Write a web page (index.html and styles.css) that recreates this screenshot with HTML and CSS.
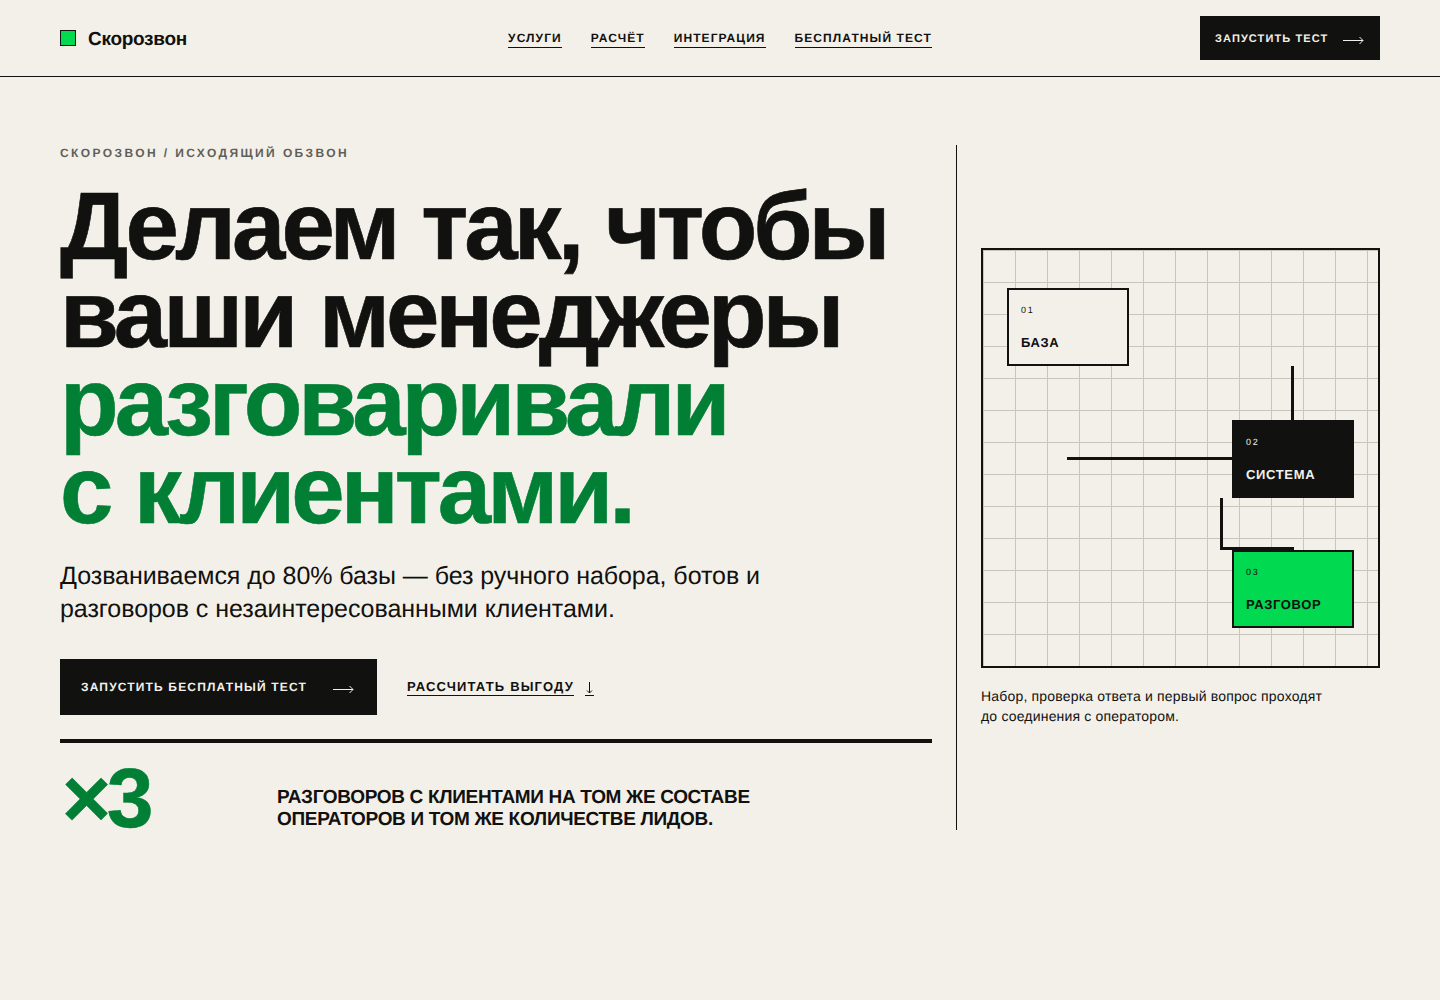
FILE: index.html
```html
<!DOCTYPE html>
<html lang="ru">
<head>
<meta charset="utf-8">
<title>Скорозвон</title>
<link rel="stylesheet" href="styles.css">
</head>
<body>
<header class="header">
  <a class="brand"><span class="brand-mark"></span><span class="brand-name">Скорозвон</span></a>
  <nav class="nav">
    <a>Услуги</a>
    <a>Расчёт</a>
    <a>Интеграция</a>
    <a>Бесплатный тест</a>
  </nav>
  <a class="btn btn-small"><span class="btn-label">Запустить тест</span>
    <svg class="arrow" width="21" height="9" viewBox="0 0 21 9"><path d="M0 4.5H20M16.5 1L20 4.5L16.5 8" fill="none" stroke="currentColor"/></svg>
  </a>
</header>
<main class="hero">
  <section class="lead">
    <p class="eyebrow">Скорозвон / исходящий обзвон</p>
    <h1 class="title">Делаем так, чтобы<br>ваши менеджеры<br><em>разговаривали<br>с клиентами.</em></h1>
    <p class="sub">Дозваниваемся до 80% базы — без ручного набора, ботов и<br>разговоров с незаинтересованными клиентами.</p>
    <div class="actions">
      <a class="btn btn-large">Запустить бесплатный тест
        <svg class="arrow" width="21" height="9" viewBox="0 0 21 9"><path d="M0 4.5H20M16.5 1L20 4.5L16.5 8" fill="none" stroke="currentColor"/></svg>
      </a>
      <a class="link"><span class="link-text">Рассчитать выгоду</span><span class="link-arrow"><svg width="9" height="13" viewBox="0 0 9 13"><path d="M4.5 1V12M2 9.5L4.5 12L7 9.5" fill="none" stroke="currentColor"/></svg></span></a>
    </div>
    <div class="stat">
      <div class="stat-num">×3</div>
      <p class="stat-text">Разговоров с клиентами на том же составе<br>операторов и том же количестве лидов.</p>
    </div>
  </section>
  <aside class="side">
    <div class="diagram">
      <div class="wire wire-a"></div>
      <div class="wire wire-b"></div>
      <div class="wire wire-c"></div>
      <div class="wire wire-d"></div>
      <div class="node node-1"><span class="node-num">01</span><span class="node-label">База</span></div>
      <div class="node node-2"><span class="node-num">02</span><span class="node-label">Система</span></div>
      <div class="node node-3"><span class="node-num">03</span><span class="node-label">Разговор</span></div>
    </div>
    <p class="caption">Набор, проверка ответа и первый вопрос проходят<br>до соединения с оператором.</p>
  </aside>
</main>
</body>
</html>
```
FILE: styles.css
```css
* { box-sizing: border-box; }
html, body { margin: 0; padding: 0; }
body {
  background: #f3f0e9;
  color: #11110f;
  font-family: "Liberation Sans", Arial, sans-serif;
  text-rendering: geometricPrecision;
  min-height: 1000px;
}
p, h1 { margin: 0; }

.header {
  height: 77px;
  padding: 0 60px;
  border-bottom: 1px solid #11110f;
  display: grid;
  grid-template-columns: 1fr auto 1fr;
  align-items: center;
}
.brand { display: flex; align-items: center; gap: 12px; }
.brand-mark { width: 16px; height: 16px; background: #00d950; border: 1px solid #11110f; }
.brand-name { font-size: 19px; line-height: 24px; font-weight: 700; letter-spacing: -0.015em; padding-top: 4px; }
.nav { display: flex; gap: 29px; padding-top: 2px; }
.nav a {
  font-size: 12px;
  font-weight: 700;
  letter-spacing: 0.09em;
  text-transform: uppercase;
  line-height: 16px;
  padding-bottom: 1px;
  border-bottom: 1px solid #11110f;
}
.btn {
  display: inline-flex;
  align-items: center;
  justify-content: space-between;
  background: #11110f;
  color: #f3f0e9;
  font-weight: 700;
  text-transform: uppercase;
  letter-spacing: 0.1em;
  font-size: 11px;
}
.btn-small { justify-self: end; width: 180px; height: 44px; padding: 0 16px 0 15px; }
.btn-label { padding-top: 1px; }
.btn-small .arrow { margin-top: 4px; }
.btn-large { width: 317px; height: 56px; padding: 0 23px 0 21px; font-size: 12px; letter-spacing: 0.097em; }
.btn-large .arrow { margin-top: 4px; }

.hero {
  display: grid;
  grid-template-columns: 872px 448px;
  gap: 0 24px;
  padding: 68px 60px 0;
}
.eyebrow {
  font-size: 12px;
  line-height: 16px;
  font-weight: 700;
  letter-spacing: 0.2em;
  text-transform: uppercase;
  color: #5f5f59;
}
.title {
  margin-top: 22px;
  font-size: 96px;
  line-height: 88px;
  font-weight: 700;
  letter-spacing: -0.0415em;
  word-spacing: 2px;
  -webkit-text-stroke: 0.6px currentColor;
}
.title em { font-style: normal; color: #007f35; }
.sub {
  margin-top: 25px;
  font-size: 25px;
  line-height: 33px;
  letter-spacing: -0.002em;
}
.actions { display: flex; align-items: center; gap: 30px; margin-top: 33px; }
.link {
  display: flex;
  gap: 11px;
  font-size: 13px;
  font-weight: 700;
  letter-spacing: 0.09em;
  text-transform: uppercase;
}
.link-text, .link-arrow { border-bottom: 1px solid #11110f; line-height: 17px; height: 18px; }
.link-arrow { display: block; }
.link-arrow svg { display: block; margin-top: 3px; }
.stat {
  margin-top: 24px;
  border-top: 4px solid #11110f;
  display: grid;
  grid-template-columns: 217px 1fr;
  align-items: end;
  height: 91px;
}
.stat-num {
  font-size: 84px;
  line-height: 67px;
  font-weight: 700;
  letter-spacing: -0.05em;
  color: #007f35;
  padding-left: 2px;
  margin-bottom: -2px;
  -webkit-text-stroke: 0.5px currentColor;
}
.stat-text {
  font-size: 19px;
  line-height: 22px;
  font-weight: 700;
  letter-spacing: -0.017em;
  text-transform: uppercase;
  margin-bottom: -1px;
}

.side {
  border-left: 1px solid #11110f;
  padding-left: 24px;
  display: flex;
  flex-direction: column;
  padding-top: 103px;
}
.diagram {
  position: relative;
  width: 399px;
  height: 420px;
  border: 2px solid #11110f;
  background-image:
    linear-gradient(#c8c5bd 1px, transparent 1px),
    linear-gradient(90deg, #c8c5bd 1px, transparent 1px);
  background-size: 32px 32px;
}
.wire { position: absolute; background: #11110f; }
.wire-a { left: 308px; top: 116px; width: 3px; height: 54px; }
.wire-b { left: 84px; top: 207px; width: 165px; height: 3px; }
.wire-c { left: 237px; top: 248px; width: 3px; height: 52px; }
.wire-d { left: 237px; top: 297px; width: 74px; height: 3px; }
.node {
  position: absolute;
  width: 122px;
  height: 78px;
  border: 2px solid #11110f;
  padding: 14px 12px 0;
  display: flex;
  flex-direction: column;
  background: #f3f0e9;
}
.node-1 { left: 24px; top: 38px; }
.node-2 { left: 249px; top: 170px; background: #11110f; color: #f3f0e9; }
.node-3 { left: 249px; top: 300px; background: #00d950; }
.node-num { font-size: 9px; line-height: 12px; letter-spacing: 0.2em; }
.node-label {
  margin-top: 18px;
  font-size: 13px;
  line-height: 18px;
  font-weight: 700;
  letter-spacing: 0.05em;
  text-transform: uppercase;
}
.caption {
  margin-top: 18px;
  font-size: 14px;
  line-height: 20px;
  letter-spacing: 0.013em;
}
```
